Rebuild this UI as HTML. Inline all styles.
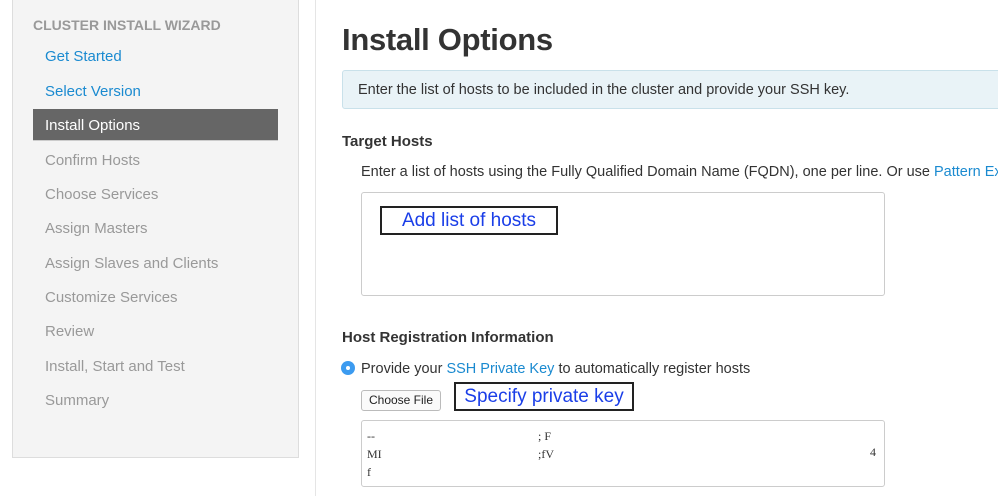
<!DOCTYPE html><html><head><style>
body{margin:0;width:998px;height:496px;overflow:hidden;background:#fff;font-family:"Liberation Sans",sans-serif;position:relative}
.wrap{position:absolute;left:0;top:0;width:998px;height:496px;overflow:hidden}
.a{position:absolute;white-space:nowrap}
.side{position:absolute;left:12px;top:-1px;width:285px;height:457px;background:#f4f4f4;border:1px solid #ddd}
.it{position:absolute;left:45px;font-size:15px;color:#999}
.lk{color:#1a8ad0}
</style></head><body><div class="wrap">
<div class="side"></div>
<div class="a" style="left:33px;top:17px;font-size:14px;font-weight:bold;color:#999">CLUSTER INSTALL WIZARD</div>
<div class="it lk" style="top:48px">Get Started</div>
<div class="it lk" style="top:83px">Select Version</div>
<div class="a" style="left:33px;top:109px;width:245px;height:31px;background:#666;border-bottom:1px solid #ccc"></div>
<div class="it" style="top:117px;color:#fff">Install Options</div>
<div class="it" style="top:152px">Confirm Hosts</div>
<div class="it" style="top:186px">Choose Services</div>
<div class="it" style="top:220px">Assign Masters</div>
<div class="it" style="top:255px">Assign Slaves and Clients</div>
<div class="it" style="top:289px">Customize Services</div>
<div class="it" style="top:323px">Review</div>
<div class="it" style="top:358px">Install, Start and Test</div>
<div class="it" style="top:392px">Summary</div>
<div class="a" style="left:315px;top:0;width:1px;height:496px;background:#e5e5e5"></div>
<div class="a" style="left:342px;top:22px;font-size:31px;font-weight:bold;color:#333;letter-spacing:-0.3px">Install Options</div>
<div class="a" style="left:342px;top:70px;width:660px;height:37px;background:#e9f3f7;border:1px solid #c9e1ea;border-radius:3px"></div>
<div class="a" style="left:358px;top:82px;font-size:14.5px;color:#333">Enter the list of hosts to be included in the cluster and provide your SSH key.</div>
<div class="a" style="left:342px;top:133px;font-size:15px;font-weight:bold;color:#333">Target Hosts</div>
<div class="a" style="left:361px;top:164px;font-size:14.5px;color:#333">Enter a list of hosts using the Fully Qualified Domain Name (FQDN), one per line. Or use <span class="lk">Pattern Ex</span></div>
<div class="a" style="left:361px;top:192px;width:522px;height:102px;border:1px solid #ccc;border-radius:3px"></div>
<div class="a" style="left:380px;top:206px;width:174px;height:25px;border:2px solid #222;background:#fff;font-size:19px;color:#1a3ee8;text-align:center;line-height:25px">Add list of hosts</div>
<div class="a" style="left:342px;top:329px;font-size:15px;font-weight:bold;color:#333">Host Registration Information</div>
<div class="a" style="left:341px;top:361px;width:14px;height:14px;border-radius:50%;background:#3c9bf0"></div>
<div class="a" style="left:346px;top:366px;width:4px;height:4px;border-radius:50%;background:#fff"></div>
<div class="a" style="left:361px;top:361px;font-size:14.5px;color:#333">Provide your <span class="lk">SSH Private Key</span> to automatically register hosts</div>
<div class="a" style="left:361px;top:390px;width:78px;height:19px;border:1px solid #bbb;border-radius:3px;background:#fafafa;font-size:12px;line-height:19px;text-align:center;color:#222">Choose File</div>
<div class="a" style="left:454px;top:382px;width:176px;height:25px;border:2px solid #222;background:#fff;font-size:19px;color:#1a3ee8;text-align:center;line-height:25px">Specify private key</div>
<div class="a" style="left:361px;top:420px;width:522px;height:65px;border:1px solid #ccc;border-radius:3px"></div>
<div class="a" style="left:367px;top:427px;font-family:'Liberation Serif',serif;font-size:12px;color:#333;line-height:18px">--<br>MI<br>f</div>
<div class="a" style="left:538px;top:427px;font-family:'Liberation Serif',serif;font-size:12px;color:#333;line-height:18px">; F<br>;fV</div>
<div class="a" style="left:870px;top:445px;font-family:'Liberation Serif',serif;font-size:12px;color:#333">4</div>
</div></body></html>
